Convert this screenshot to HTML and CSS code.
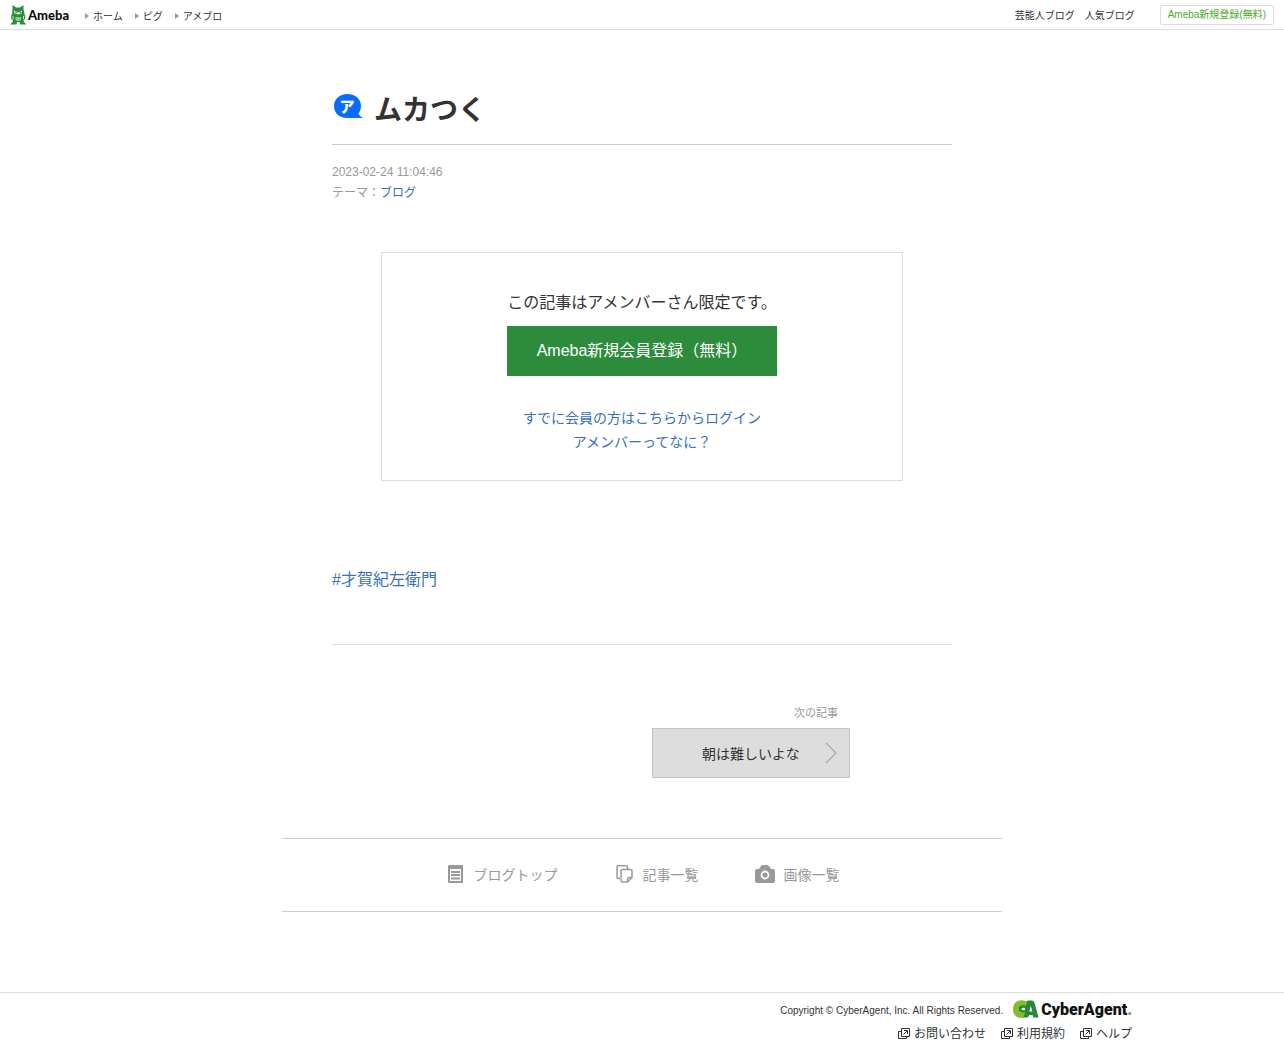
FILE: index.html
```html
<!DOCTYPE html>
<html lang="ja">
  <head>
    <meta charset="UTF-8">
    <meta name="viewport" content="width=device-width, initial-scale=1">
    <title>ムカつく</title>
    <link rel="stylesheet" href="styles.css">
  </head>
  <body>
    <header id="header">
      <a class="logo" href="#">
        <svg width="17" height="20" viewBox="0 0 17 20" aria-hidden="true">
          <path fill="#2d8c3c" d="M2.500 0 L6 2.500 H10 L13.500 0 L13.500 4 L14.500 9 Q16 11 15 14 L13.500 15 L14 17 L16.500 19.500 H10 L9.500 17 H7 L6.500 19.500 H0 L2.500 17 L3 15 L1.200 14 Q0.500 11 2 9 L2.500 4 Z"/>
          <path fill="#fff" d="M4 5.500 L8 7.500 L12 5.500 L11.500 8.500 L8.300 9.500 L4.500 8.500 Z"/>
          <circle cx="6" cy="7.500" r="0.900" fill="#2d8c3c"/>
          <circle cx="10.300" cy="7.500" r="0.900" fill="#2d8c3c"/>
          <path fill="#8bcf93" d="M5.500 12 H11 V15 Q8 17 5.500 15 Z"/>
          <path stroke="#fff" stroke-width="0.800" d="M3 11 V14 M13.500 11 V14"/>
        </svg>
        <span>Ameba</span>
      </a>
      <ul class="menu">
        <li><a href="#">ホーム</a></li>
        <li><a href="#">ピグ</a></li>
        <li><a href="#">アメブロ</a></li>
      </ul>
      <ul class="menu-right">
        <li><a href="#">芸能人ブログ</a></li>
        <li><a href="#">人気ブログ</a></li>
      </ul>
      <a class="btn-regist" href="#">Ameba新規登録(無料)</a>
    </header>
    <main class="content">
      <article>
        <h1>
          <svg width="32" height="28" viewBox="0 0 32 28" role="img" aria-label="アメンバー限定">
            <path fill="#0a6cff" d="M15.500 1 C23.500 1 29 6 29 13 C29 16 28 18.500 26.500 20.500 C27.500 22.500 29 24 31.500 25 H15 C7 25 2 20 2 13 C2 6 7.500 1 15.500 1 Z"/>
            <text class="bubble-text" x="15" y="19" text-anchor="middle">ア</text>
          </svg>
          <a href="#">ムカつく</a>
        </h1>
        <div class="post-data">
          <p><time datetime="2023-02-24T11:04:46">2023-02-24 11:04:46</time></p>
          <p>テーマ：<a href="#">ブログ</a></p>
        </div>
        <section class="limited">
          <p>この記事はアメンバーさん限定です。</p>
          <a class="btn-signup" href="#">Ameba新規会員登録（無料）</a>
          <ul>
            <li><a href="#">すでに会員の方はこちらからログイン</a></li>
            <li><a href="#">アメンバーってなに？</a></li>
          </ul>
        </section>
        <p class="tag"><a href="#">#才賀紀左衛門</a></p>
      </article>
      <div class="pager">
        <span>次の記事</span>
        <a href="#">
          朝は難しいよな
          <svg width="12" height="22" viewBox="0 0 12 22" aria-hidden="true">
            <path fill="none" stroke="#aaa" stroke-width="1.200" d="M1 1 L11 11 L1 21"/>
          </svg>
        </a>
      </div>
      <nav class="blog-nav">
        <a href="#">
          <svg width="20" height="20" viewBox="0 0 20 20" aria-hidden="true">
            <path fill="#999" fill-rule="evenodd" d="M4 0 H17 Q18 0 18 1 V17 Q18 18 17 18 H4 Q3 18 3 17 V1 Q3 0 4 0 Z M5 4 V16 H16 V4 Z"/>
            <path stroke="#999" stroke-width="1.800" d="M6 7 H15 M6 10 H15 M6 13.500 H15"/>
          </svg>
          ブログトップ
        </a>
        <a href="#">
          <svg width="20" height="20" viewBox="0 0 20 20" aria-hidden="true">
            <g fill="none" stroke="#999" stroke-width="1.500">
              <path d="M6 13.500 H4.500 Q3 13.500 3 12 V2 Q3 0.800 4.500 0.800 H12 Q13.500 0.800 13.500 2 V4"/>
              <path d="M8.500 4.500 H16.500 Q18 4.500 18 6 V12.500 L13.500 17 H8.500 Q7 17 7 15.500 V6 Q7 4.500 8.500 4.500 Z"/>
              <path d="M13.500 17 V14.500 Q13.500 12.500 15.500 12.500 H18"/>
            </g>
          </svg>
          記事一覧
        </a>
        <a href="#">
          <svg width="20" height="20" viewBox="0 0 20 20" aria-hidden="true">
            <path fill="#999" d="M2 4 H4 L6 1 Q7 0 8 0 H12 Q13 0 14 1 L16 4 H18 Q20 4 20 6 V16 Q20 18 18 18 H2 Q0 18 0 16 V6 Q0 4 2 4 Z"/>
            <circle cx="10" cy="10" r="3.500" fill="none" stroke="#fff" stroke-width="1.800"/>
          </svg>
          画像一覧
        </a>
      </nav>
    </main>
    <footer id="footer">
      <svg class="symbols" width="0" height="0" aria-hidden="true">
        <symbol id="blank" viewBox="0 0 12 12">
          <path fill="none" stroke="#333" d="M3.500 0.500 H11.500 V8.500 H3.500 Z M3.500 3.500 H0.500 V10.500 H8.500 V8.500 M5.500 6.500 L9 3 M6 2.500 H9.500 V6"/>
        </symbol>
      </svg>
      <div class="footer-inner">
        <div class="copyright">
          <small>Copyright © CyberAgent, Inc. All Rights Reserved.</small>
          <a class="ca-logo" href="#">
            <svg width="26" height="20" viewBox="0 0 26 20" aria-hidden="true">
              <path fill="#298737" fill-rule="evenodd" d="M12 4 Q13 0.500 16 0.500 H18.500 Q21 0.500 21.700 3.500 L25.500 17.500 H20.500 L19.500 15 H16 L15 17.500 H8 L12 12 Z M17.800 6 L16.200 11.500 H19.400 Z"/>
              <path fill="#82be28" d="M14 2 L12.500 7 Q10.500 5.500 8.500 6 Q5.500 7 5.500 9.500 Q6 12.500 9 12.500 Q11 12.500 12.500 11.500 L10.500 17 Q9.500 18 8 18 Q0 17.500 0 9 Q0 1 8 0.300 Q11.500 0 14 2 Z"/>
              <path fill="#298737" d="M12.500 5.500 Q9 4.500 6.500 6.500 Q4.500 9 6.500 11.500 Q9 13.500 12.500 12 V10 Q9 11 8.500 9 Q9 7 12.500 8 Z"/>
            </svg>
            <span>CyberAgent<i>.</i></span>
          </a>
        </div>
        <ul>
          <li><a href="#"><svg width="12" height="12" aria-hidden="true"><use href="#blank"/></svg>お問い合わせ</a></li>
          <li><a href="#"><svg width="12" height="12" aria-hidden="true"><use href="#blank"/></svg>利用規約</a></li>
          <li><a href="#"><svg width="12" height="12" aria-hidden="true"><use href="#blank"/></svg>ヘルプ</a></li>
        </ul>
      </div>
    </footer>
  </body>
</html>
```

FILE: styles.css
```css
body {
  margin: 0;
  background-color: #fff;
  font-family: "Liberation Sans", Arial, "Noto Sans CJK JP", sans-serif;
  font-size: 14px;
  color: #333;
}
a {
  color: #3970b5;
  text-decoration: none;
}
a:hover {
  text-decoration: underline;
}
h1, p, ul {
  margin: 0;
  padding: 0;
}
ul {
  list-style: none;
}
svg {
  flex-shrink: 0;
}
#header {
  display: flex;
  align-items: center;
  box-sizing: border-box;
  height: 30px;
  padding: 0 10px;
  border-bottom: 1px solid #ddd;
  font-size: 10px;
  white-space: nowrap;
}
#header li a {
  color: #333;
}
.logo {
  display: flex;
  align-items: center;
  gap: 1px;
  width: 75px;
}
.logo span {
  font-family: Lato, sans-serif;
  font-size: 13px;
  font-weight: 900;
  color: #111;
}
.menu {
  display: flex;
  gap: 12px;
}
.menu li {
  display: flex;
  align-items: center;
  padding-top: 2px;
}
.menu li::before {
  content: '';
  margin-right: 4px;
  border: 3px solid transparent;
  border-left: 4px solid #999;
  border-right: 0;
}
.menu-right {
  display: flex;
  gap: 10px;
  margin-left: auto;
  margin-right: 25px;
}
.btn-regist {
  box-sizing: border-box;
  height: 20px;
  padding: 0 7px;
  border: 1px solid #ddd;
  border-radius: 2px;
  line-height: 18px;
  color: #4bab2a;
}
.content {
  box-sizing: border-box;
  max-width: 720px;
  margin: 0 auto;
  padding-top: 62px;
}
article {
  margin: 0 50px;
  padding-bottom: 52px;
  border-bottom: 1px solid #ddd;
}
h1 {
  display: flex;
  align-items: center;
  gap: 10px;
  padding-bottom: 14px;
  border-bottom: 1px solid #ccc;
  font-size: 28px;
  line-height: 38px;
}
h1 a {
  color: #333;
}
h1 svg {
  margin-bottom: 8px;
}
.bubble-text {
  fill: #fff;
  font-size: 15px;
  font-weight: 900;
}
.post-data {
  margin-top: 17px;
  font-size: 12px;
  line-height: 21px;
  color: #999;
}
.limited {
  max-width: 520px;
  margin: 48px auto 0;
  padding: 37px 0 26px;
  border: 1px solid #ddd;
  text-align: center;
}
.limited p {
  font-size: 16px;
  line-height: 26px;
}
.btn-signup {
  display: inline-block;
  margin: 10px 0 30px;
  padding: 0 30px;
  background: #2d8c3c;
  font-size: 16px;
  line-height: 50px;
  color: #fff;
}
.limited ul {
  line-height: 24px;
}
.tag {
  margin-top: 87px;
  font-size: 16px;
  line-height: 24px;
}
.pager {
  display: flex;
  flex-direction: column;
  width: 198px;
  margin: 60px 152px 60px auto;
}
.pager span {
  padding-right: 12px;
  text-align: right;
  font-size: 11px;
  line-height: 16px;
  color: #999;
}
.pager a {
  display: flex;
  align-items: center;
  justify-content: space-between;
  height: 48px;
  margin-top: 7px;
  padding: 0 12px 0 49px;
  background: #ddd;
  border: 1px solid #c4c4c4;
  color: #333;
}
.blog-nav {
  display: flex;
  justify-content: center;
  gap: 56px;
  padding: 25px 0;
  border-top: 1px solid #ccc;
  border-bottom: 1px solid #ccc;
}
.blog-nav a {
  display: flex;
  align-items: center;
  gap: 9px;
  line-height: 22px;
  color: #999;
}
#footer {
  margin-top: 80px;
  padding: 7px 0 4px;
  border-top: 1px solid #ddd;
}
.symbols {
  display: none;
}
.footer-inner {
  max-width: 980px;
  margin: 0 auto;
}
.copyright {
  display: flex;
  align-items: center;
  justify-content: flex-end;
  gap: 10px;
}
.copyright small {
  font-size: 10px;
}
.ca-logo {
  display: flex;
  align-items: center;
  gap: 2px;
}
.ca-logo span {
  font-family: Roboto, sans-serif;
  font-size: 16px;
  font-weight: 900;
  line-height: 20px;
  color: #111;
}
.ca-logo i {
  font-style: normal;
  color: #777;
}
.footer-inner ul {
  display: flex;
  justify-content: flex-end;
  gap: 15px;
  margin-top: 4px;
  font-size: 12px;
}
.footer-inner li a {
  display: flex;
  align-items: center;
  gap: 4px;
  line-height: 20px;
  color: #333;
}
```
